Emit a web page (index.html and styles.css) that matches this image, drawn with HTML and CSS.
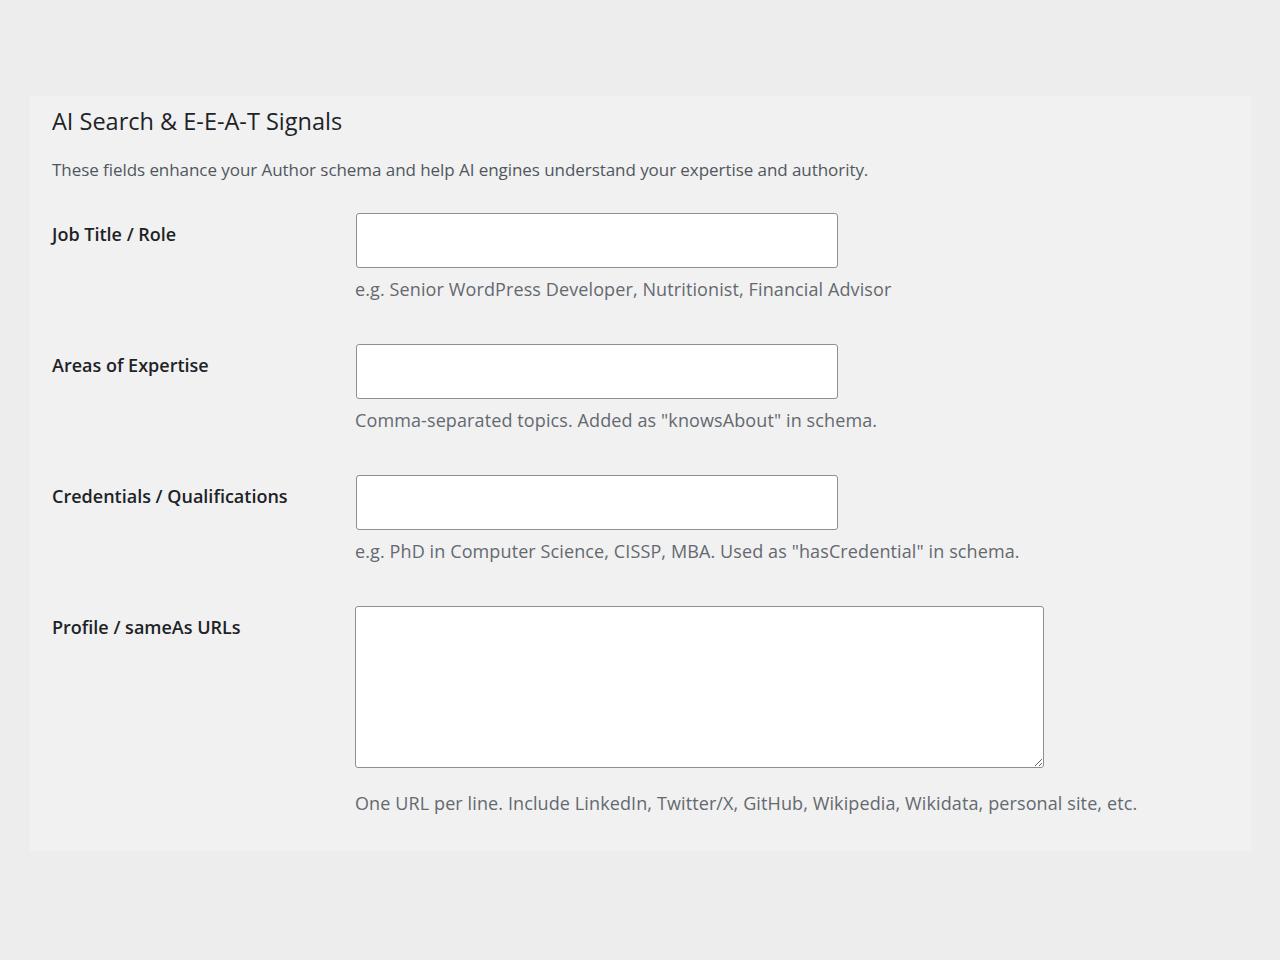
FILE: index.html
```html
<!DOCTYPE html>
<html lang="en">
<head>
    <meta charset="utf-8">
    <meta name="viewport" content="width=device-width, initial-scale=1">
    <title>AI Search &amp; E-E-A-T Signals</title>
    <link rel="stylesheet" href="styles.css">
</head>
<body>
    <div class="panel">
        <h2>AI Search &amp; E-E-A-T Signals</h2>
        <p class="intro">These fields enhance your Author schema and help AI engines understand your expertise and authority.</p>

        <div class="form-rows">
            <div class="row">
                <label class="row-label" for="job-title">Job Title / Role</label>
                <div class="row-field">
                    <input type="text" id="job-title" class="regular-text">
                    <p class="description">e.g. Senior WordPress Developer, Nutritionist, Financial Advisor</p>
                </div>
            </div>

            <div class="row">
                <label class="row-label" for="expertise">Areas of Expertise</label>
                <div class="row-field">
                    <input type="text" id="expertise" class="regular-text">
                    <p class="description">Comma-separated topics. Added as "knowsAbout" in schema.</p>
                </div>
            </div>

            <div class="row">
                <label class="row-label" for="credentials">Credentials / Qualifications</label>
                <div class="row-field">
                    <input type="text" id="credentials" class="regular-text">
                    <p class="description">e.g. PhD in Computer Science, CISSP, MBA. Used as "hasCredential" in schema.</p>
                </div>
            </div>

            <div class="row row-last">
                <label class="row-label" for="same-as">Profile / sameAs URLs</label>
                <div class="row-field">
                    <textarea id="same-as" class="large-text"></textarea>
                    <p class="description description-spaced">One URL per line. Include LinkedIn, Twitter/X, GitHub, Wikipedia, Wikidata, personal site, etc.</p>
                </div>
            </div>
        </div>
    </div>
</body>
</html>
```

FILE: styles.css
```css
body {
    margin: 0;
    padding: 96px 29px 0 30px;
    background-color: #ededed;
    font-family: 'Open Sans', 'Noto Sans', sans-serif;
    color: #1d2327;
}

.panel {
    background-color: #f1f1f1;
    padding: 6px 22px 37px 22px;
}

h2 {
    margin: 0;
    font-size: 23.5px;
    font-weight: 400;
    line-height: 38px;
    color: #1d2327;
}

.intro {
    margin: 18px 0 0 0;
    font-size: 17px;
    line-height: 24px;
    color: #50575e;
    letter-spacing: -0.06px;
}

.form-rows {
    margin-top: 31px;
}

.row {
    display: flex;
    height: 131px;
}

.row-last {
    height: auto;
}

.row-label {
    width: 304px;
    flex: none;
    padding-top: 10px;
    font-size: 18px;
    font-weight: 600;
    line-height: 22px;
    color: #1d2327;
}

.row-field {
    flex: 1;
}

input.regular-text,
textarea.large-text {
    display: block;
    box-sizing: border-box;
    margin: 0;
    border: 1px solid #8c8f94;
    border-radius: 3px;
    background-color: #ffffff;
    font-family: inherit;
    font-size: 16px;
}

input.regular-text {
    width: 482px;
    height: 55px;
}

textarea.large-text {
    width: 689px;
    height: 162px;
    margin-left: -1px;
}

.description {
    margin: 10px 0 0 -1px;
    font-size: 18px;
    line-height: 22px;
    color: #646970;
    letter-spacing: 0.11px;
}

.description-spaced {
    margin-top: 24px;
}
```
